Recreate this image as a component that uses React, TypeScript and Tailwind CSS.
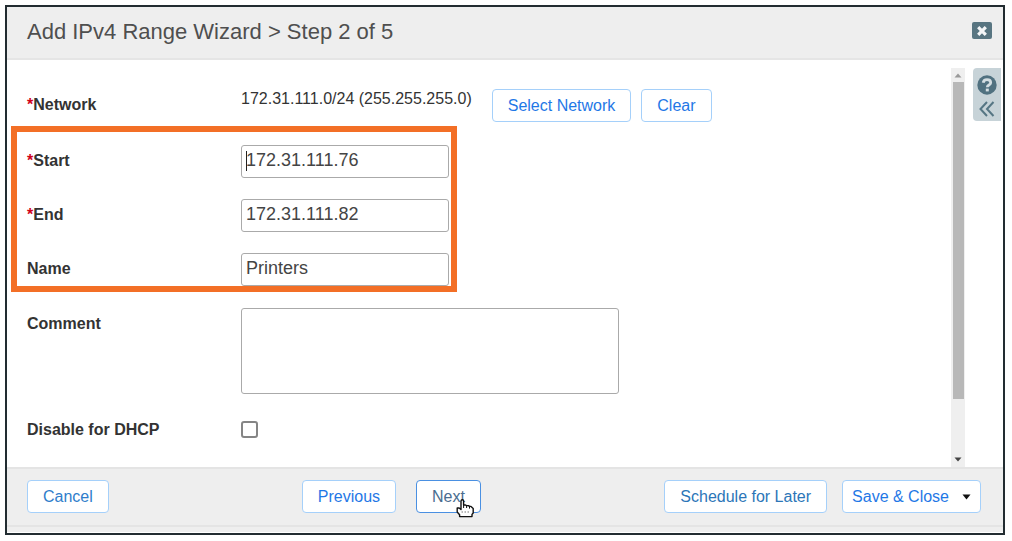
import type { ButtonHTMLAttributes, ReactNode } from "react";

type WizardButtonProps = ButtonHTMLAttributes<HTMLButtonElement> & {
  tone?: string;
  children: ReactNode;
};

function WizardButton({
  tone = "border-[#a5d0fa] px-[15px] text-[#1f78e6]",
  children,
  ...rest
}: WizardButtonProps) {
  return (
    <button
      type="button"
      className={`relative flex h-[33px] shrink-0 items-center rounded-[4px] border bg-white text-[16px] whitespace-nowrap ${tone}`}
      {...rest}
    >
      {children}
    </button>
  );
}

function FieldLabel({ htmlFor, required, children }: { htmlFor?: string; required?: boolean; children: ReactNode }) {
  return (
    <label htmlFor={htmlFor} className="text-[16px] leading-[31px] font-bold text-[#333]">
      {required && <span className="text-[#d0021b]">*</span>}
      {children}
    </label>
  );
}

function FieldRow({ children }: { children: ReactNode }) {
  return <div className="grid grid-cols-[214px_1fr] items-start">{children}</div>;
}

function TextField({ id, label, value, required, caret }: {
  id: string;
  label: string;
  value: string;
  required?: boolean;
  caret?: boolean;
}) {
  return (
    <FieldRow>
      <FieldLabel htmlFor={id} required={required}>{label}</FieldLabel>
      <div className="relative flex">
        <input
          id={id}
          type="text"
          defaultValue={value}
          className="h-[33px] w-[208px] rounded-[3px] border border-[#aaa] bg-white px-1 pb-[2px] text-[18px] text-[#444] outline-none"
        />
        {caret && <span className="absolute top-[6px] left-[5px] h-5 w-px bg-[#222]" />}
      </div>
    </FieldRow>
  );
}

function HandCursor() {
  return (
    <svg
      className="pointer-events-none absolute top-[18px] left-[39px]"
      width="20"
      height="19"
      viewBox="0 0 20 19"
      aria-hidden="true"
    >
      <path
        d="M5 10.5V2.3Q5 0.8 6.3 0.8Q7.6 0.8 7.6 2.3V6H9.5L10.6 6.6H12.5L13.5 7.4H15L17.2 9.4V14L16 15.4V17.6H3.6V15.8L1.2 13V9H3.2Z"
        fill="#fff"
        stroke="#111"
        strokeWidth="1.4"
        strokeLinejoin="round"
      />
      <path d="M7.6 6V9M10.6 6.6V9M13.5 7.4V9.6" stroke="#111" strokeWidth="1" />
      <path d="M5.5 13H14.5" stroke="#777" strokeWidth="1.2" strokeDasharray="1.5 1.5" />
    </svg>
  );
}

export default function App() {
  return (
    <div className="bg-white pt-[5px] pr-[7px] pb-[6px] pl-[5px] font-['Liberation_Sans',Arial,sans-serif]">
      <div className="border-2 border-[#222c31] bg-white">
        <header className="flex h-[53px] items-center justify-between border-b-2 border-[#e5e5e5] bg-[#eee] pr-[11px] pl-5">
          <h1 className="pb-[3px] text-[22px] text-[#4f4f4f]">Add IPv4 Range Wizard &gt; Step 2 of 5</h1>
          <button
            type="button"
            aria-label="Close"
            className="mb-1 flex h-[17px] w-5 items-center justify-center rounded-[2px] bg-[#587581]"
          >
            <svg width="12" height="12" viewBox="0 0 12 12" aria-hidden="true">
              <path d="M2.2 2.2L9.8 9.8M9.8 2.2L2.2 9.8" stroke="#f4f6f7" strokeWidth="3.2" />
            </svg>
          </button>
        </header>

        <main className="flex">
          <form className="flex grow flex-col gap-[21px] pt-[29px] pb-[29px] pl-5">
            <FieldRow>
              <FieldLabel required>Network</FieldLabel>
              <div className="flex">
                <span className="text-[16px] leading-[20px] text-[#333]">172.31.111.0/24 (255.255.255.0)</span>
                <div className="ml-5 flex gap-[10px]">
                  <WizardButton>Select Network</WizardButton>
                  <WizardButton>Clear</WizardButton>
                </div>
              </div>
            </FieldRow>

            <div className="relative mt-[2px] flex flex-col gap-[21px]">
              <TextField id="start" label="Start" value="172.31.111.76" required caret />
              <TextField id="end" label="End" value="172.31.111.82" required />
              <TextField id="name" label="Name" value="Printers" />
              <div className="pointer-events-none absolute -top-[19px] -bottom-[6px] -left-[16px] w-[446px] border-[6px] border-[#f36f26]" />
            </div>

            <div className="flex flex-col pt-[1px]">
              <FieldRow>
                <FieldLabel htmlFor="comment">Comment</FieldLabel>
                <textarea
                  id="comment"
                  className="h-[86px] w-[378px] resize-none rounded-[3px] border border-[#aaa] bg-white outline-none"
                />
              </FieldRow>
            </div>

            <div className="grid grid-cols-[214px_1fr] items-center pt-[6px]">
              <label htmlFor="dhcp" className="text-[16px] leading-[17px] font-bold text-[#333]">
                Disable for DHCP
              </label>
              <input
                id="dhcp"
                type="checkbox"
                className="size-[17px] appearance-none rounded-[3px] border-2 border-[#858585] bg-white"
              />
            </div>
          </form>

          <div className="mt-2 flex w-[14px] shrink-0 flex-col items-center bg-[#efefef]" aria-hidden="true">
            <svg width="14" height="14" viewBox="0 0 14 14">
              <path d="M7 5.5L10.5 9.5H3.5Z" fill="#999" />
            </svg>
            <div className="w-[11px] grow bg-[#b8b8b8]" />
            <div className="flex h-[68px] items-end">
              <svg width="14" height="14" viewBox="0 0 14 14">
                <path d="M7 8.5L10.5 4.5H3.5Z" fill="#444" />
              </svg>
            </div>
          </div>

          <aside className="mt-2 mr-[2px] ml-2 flex h-[53px] w-7 shrink-0 flex-col items-center rounded-l-[4px] bg-[#c7d3d8] pt-[7px]">
            <button type="button" aria-label="Help">
              <svg width="20" height="20" viewBox="0 0 20 20" aria-hidden="true">
                <circle cx="10" cy="10" r="9.7" fill="#507180" />
                <path
                  d="M6.2 7.8C6.5 5.6 8 4.7 10 4.7C12.1 4.7 13.7 5.9 13.7 7.7C13.7 10.1 10.3 9.8 10.3 12.2"
                  fill="none"
                  stroke="#d3dde1"
                  strokeWidth="2.8"
                />
                <rect x="8.8" y="13.6" width="3" height="2.8" fill="#d3dde1" />
              </svg>
            </button>
            <button type="button" aria-label="Expand panel" className="mt-[6px]">
              <svg width="16" height="16" viewBox="0 0 16 16" aria-hidden="true">
                <path d="M8 1L1.5 8L8 15M14.5 1L8 8L14.5 15" fill="none" stroke="#567684" strokeWidth="2" />
              </svg>
            </button>
          </aside>
        </main>

        <footer className="bg-[#eee]">
          <div className="flex items-center border-y-2 border-[#e4e4e4] pt-[11px] pr-[22px] pb-[12px] pl-5">
            <WizardButton tone="border-[#a5d0fa] px-[15px] text-[#2f7dcb]">Cancel</WizardButton>
            <div className="ml-[193px] flex gap-5">
              <WizardButton>Previous</WizardButton>
              <WizardButton tone="border-[#4a90e2] px-[15px] text-[#4a6d90]">
                Next
                <HandCursor />
              </WizardButton>
            </div>
            <div className="ml-auto flex gap-[15px]">
              <WizardButton tone="border-[#a5d0fa] px-[15px] text-[#2c76b8]">Schedule for Later</WizardButton>
              <WizardButton tone="border-[#a5d0fa] px-[9px] gap-[13px] text-[#1f78e6]">
                Save &amp; Close
                <svg width="9" height="6" viewBox="0 0 9 6" aria-hidden="true">
                  <path d="M0.5 0.5H8.5L4.5 5.5Z" fill="#111" />
                </svg>
              </WizardButton>
            </div>
          </div>
          <div className="h-[6px] border-b border-white" />
        </footer>
      </div>
    </div>
  );
}
